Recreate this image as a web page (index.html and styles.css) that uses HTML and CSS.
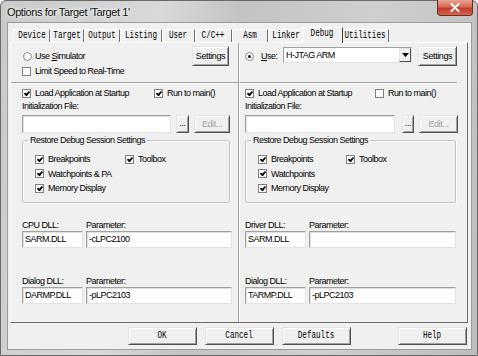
FILE: index.html
```html
<!DOCTYPE html>
<html>
<head>
<meta charset="utf-8">
<title>Options for Target 'Target 1'</title>
<link rel="stylesheet" href="styles.css">
</head>
<body>
<div class="window">
  <div class="titlebar">
    <span class="title">Options for Target 'Target 1'</span>
    <div class="close"><svg width="12" height="9" viewBox="0 0 12 9"><path d="M2.5 1 L9.5 8 M9.5 1 L2.5 8" stroke="#fff" stroke-width="2" stroke-linecap="round"/></svg></div>
  </div>
  <div class="client">
    <div class="tabs">
      <div class="tab t-device"><span class="mono">Device</span></div>
      <div class="tab t-target"><span class="mono">Target</span></div>
      <div class="tab t-output"><span class="mono">Output</span></div>
      <div class="tab t-listing"><span class="mono">Listing</span></div>
      <div class="tab t-user"><span class="mono">User</span></div>
      <div class="tab t-cc"><span class="mono">C/C++</span></div>
      <div class="tab t-asm"><span class="mono">Asm</span></div>
      <div class="tab t-linker"><span class="mono">Linker</span></div>
      <div class="tab t-debug selected"><span class="mono">Debug</span></div>
      <div class="tab t-util"><span class="mono">Utilities</span></div>
    </div>
    <div class="page">
      <div class="half half-left">
        <div class="row row-top">
          <span class="radio"></span><span class="lbl">Use <u>S</u>imulator</span>
          <button class="btn settings-l">Settings</button>
        </div>
        <div class="row row-limit">
          <span class="check"></span><span class="lbl">Limit Speed to Real-Time</span>
        </div>
        <div class="sep sep-l"></div>
        <div class="row row-load">
          <span class="check on"></span><span class="lbl load-l">Load Application at Startup</span>
          <span class="check on"></span><span class="lbl">Run to main()</span>
        </div>
        <div class="row row-label">Initialization File:</div>
        <div class="row row-init">
          <div class="input init-l"></div>
          <button class="btn dots">...</button>
          <button class="btn edit edit-l">Edit...</button>
        </div>
        <fieldset class="group group-l">
          <legend>Restore Debug Session Settings</legend>
          <div class="grid grid-l">
            <div class="row-c"><span class="check on"></span><span class="lbl">Breakpoints</span></div>
            <div class="row-c"><span class="check on"></span><span class="lbl">Toolbox</span></div>
            <div class="row-c"><span class="check on"></span><span class="lbl">Watchpoints &amp; PA</span></div>
            <div class="row-c"></div>
            <div class="row-c"><span class="check on"></span><span class="lbl">Memory Display</span></div>
          </div>
        </fieldset>
        <div class="row row-dlllabel first">
          <span class="dll-col">CPU DLL:</span><span>Parameter:</span>
        </div>
        <div class="row row-dll">
          <div class="input dll">SARM.DLL</div>
          <div class="input par-l">-cLPC2100</div>
        </div>
        <div class="row row-dlllabel second">
          <span class="dll-col">Dialog DLL:</span><span>Parameter:</span>
        </div>
        <div class="row row-dll">
          <div class="input dll">DARMP.DLL</div>
          <div class="input par-l">-pLPC2103</div>
        </div>
      </div>
      <div class="half half-right">
        <div class="row row-top">
          <span class="radio on"></span><span class="lbl use"><u>U</u>se:</span>
          <div class="combo"><span class="combo-text">H-JTAG ARM</span><span class="combo-btn"><svg width="7" height="4" viewBox="0 0 7 4"><path d="M0 0 H7 L3.5 4 Z" fill="#000"/></svg></span></div>
          <button class="btn settings-r">Settings</button>
        </div>
        <div class="row row-limit"></div>
        <div class="sep sep-r"></div>
        <div class="row row-load">
          <span class="check on"></span><span class="lbl load-r">Load Application at Startup</span>
          <span class="check"></span><span class="lbl">Run to main()</span>
        </div>
        <div class="row row-label">Initialization File:</div>
        <div class="row row-init">
          <div class="input init-r"></div>
          <button class="btn dots dots-r">...</button>
          <button class="btn edit edit-r">Edit...</button>
        </div>
        <fieldset class="group group-r">
          <legend>Restore Debug Session Settings</legend>
          <div class="grid grid-r">
            <div class="row-c"><span class="check on"></span><span class="lbl">Breakpoints</span></div>
            <div class="row-c"><span class="check on"></span><span class="lbl">Toolbox</span></div>
            <div class="row-c"><span class="check on"></span><span class="lbl">Watchpoints</span></div>
            <div class="row-c"></div>
            <div class="row-c"><span class="check on"></span><span class="lbl">Memory Display</span></div>
          </div>
        </fieldset>
        <div class="row row-dlllabel first">
          <span class="dll-col">Driver DLL:</span><span>Parameter:</span>
        </div>
        <div class="row row-dll">
          <div class="input dll">SARM.DLL</div>
          <div class="input par-r"></div>
        </div>
        <div class="row row-dlllabel second">
          <span class="dll-col">Dialog DLL:</span><span>Parameter:</span>
        </div>
        <div class="row row-dll">
          <div class="input dll">TARMP.DLL</div>
          <div class="input par-r">-pLPC2103</div>
        </div>
      </div>
    </div>
    <div class="buttons">
      <button class="btn dlg"><span class="mono">OK</span></button>
      <button class="btn dlg"><span class="mono">Cancel</span></button>
      <button class="btn dlg"><span class="mono">Defaults</span></button>
      <button class="btn dlg help"><span class="mono">Help</span></button>
    </div>
  </div>
</div>
</body>
</html>
```
FILE: styles.css
```css
* { box-sizing: border-box; margin: 0; padding: 0; }
html, body { width: 478px; height: 356px; overflow: hidden; background: #fff; }
body {
  font-family: "Liberation Sans", Arial, sans-serif;
  font-size: 9px;
  letter-spacing: -0.5px;
  line-height: 12px;
  color: #000;
}
u { text-decoration: underline; text-underline-offset: 1px; }

.window {
  width: 478px; height: 356px;
  display: flex; flex-direction: column;
  background: linear-gradient(100deg, #c9c9c9 0%, #d9d9d9 30%, #c3c3c3 45%, #cfcfcf 70%, #bdbdbd 100%);
  border: 1px solid #6a6a6a;
  border-radius: 6px 6px 0 0;
  position: relative;
}
.titlebar { height: 21px; display: flex; align-items: center; padding-left: 6px; }
.title {
  font-size: 11px; letter-spacing: -0.4px; color: #111;
  text-shadow: 0 0 6px #fff, 0 0 3px #fff;
}
.close {
  position: absolute; top: -1px; right: 4px;
  width: 36px; height: 16px;
  border: 1px solid #6b2a22; border-top: none;
  border-radius: 0 0 4px 4px;
  background: linear-gradient(#e8a493 0%, #d46b55 45%, #c1392a 55%, #d5674e 100%);
  display: flex; align-items: center; justify-content: center;
}

.client {
  flex: 1;
  margin: 0 5px 5px 6px;
  background: #f0f0f0;
  border: 1px solid #9c9c9c;
  display: flex; flex-direction: column;
}

.mono {
  display: inline-block;
  font-family: "Liberation Mono", monospace;
  font-size: 10px;
  letter-spacing: 0;
  transform: scaleX(0.76);
  white-space: nowrap;
}

/* tabs */
.tabs { display: flex; height: 15px; margin-top: 4px; padding-left: 5px; position: relative; z-index: 2; }
.tab {
  height: 13px; margin-top: 2px;
  border-left: 1px solid #fff; border-top: 1px solid #fff;
  border-right: 1px solid #6d6d6d;
  display: flex; align-items: center; justify-content: center;
  background: #f0f0f0;
  overflow: hidden;
}
.tab.selected {
  height: 16px; margin-top: 0; margin-left: -2px; margin-right: -2px;
  border-right: 1px solid #404040;
  padding-bottom: 3px;
  position: relative; z-index: 3;
}
.t-device { width: 37px; }
.t-target { width: 34px; }
.t-output { width: 36px; }
.t-listing { width: 42px; }
.t-user { width: 33px; }
.t-cc { width: 37px; }
.t-asm { width: 36px; }
.t-linker { width: 36px; }
.t-debug { width: 41px; }
.t-util { width: 48px; }

/* page */
.page {
  height: 281px;
  margin-left: 2px; width: 458px;
  border: 1px solid;
  border-color: #fff #6d6d6d #6d6d6d #fff;
  display: flex;
  background: #f0f0f0;
}
.half { display: flex; flex-direction: column; }
.half-left { width: 228px; padding-left: 11px; padding-right: 9px; border-right: 1px solid #a0a0a0; }
.half-right { width: 228px; padding-left: 5px; padding-right: 10px; border-left: 1px solid #fff; }

.row { display: flex; align-items: center; white-space: nowrap; }
.row-top { height: 20px; margin-top: 3px; }
.row-limit { height: 10px; }
.row-load { height: 12px; margin-top: 3px; }
.row-label { height: 12px; margin-top: 1px; }
.row-init { height: 18px; margin-top: 3px; }
.row-dlllabel { height: 12px; }
.row-dlllabel.first { margin-top: 16px; }
.row-dlllabel.second { margin-top: 28px; }
.row-dll { height: 16px; }

.sep { height: 2px; border-top: 1px solid #a0a0a0; border-bottom: 1px solid #fff; margin-top: 6px; }
.sep-l { margin-left: -11px; margin-right: -9px; }
.sep-r { margin-left: -5px; margin-right: 0; }

.radio {
  width: 9px; height: 9px; border-radius: 50%;
  border: 1px solid #8a8a8a;
  background: radial-gradient(circle at 40% 40%, #fff 50%, #e4e4e4 100%);
  margin-left: 1px; margin-right: 3px;
  display: inline-flex; align-items: center; justify-content: center;
  flex: none;
}
.radio.on::after { content: ""; width: 3px; height: 3px; border-radius: 50%; background: #111; }
.half-right .radio { margin-left: 0; margin-right: 7px; }

.check {
  width: 9px; height: 9px; flex: none;
  border: 1px solid #808080;
  background: #fff;
  margin-right: 4px;
  position: relative;
}
.check.on::after {
  content: ""; position: absolute; left: 1px; top: 0px;
  width: 4px; height: 2px;
  border-left: 2px solid #000; border-bottom: 2px solid #000;
  transform: translate(0, 1px) rotate(-50deg) scale(0.9);
}
.lbl { line-height: 12px; }
.load-l { width: 119px; }
.load-r { width: 117px; }
.use { width: 22px; }

.btn {
  font-family: inherit; font-size: 9px; letter-spacing: -0.4px; color: #000;
  background: #f0f0f0;
  border: 1px solid;
  border-color: #e3e3e3 #505050 #505050 #e3e3e3;
  box-shadow: inset 1px 1px #fff, inset -1px -1px #a0a0a0;
  display: flex; align-items: center; justify-content: center;
  line-height: 12px;
  flex: none;
}
.settings-l { width: 37px; height: 20px; margin-left: auto; }
.settings-r { width: 39px; height: 20px; margin-left: auto; }
.dots { width: 13px; height: 18px; margin-left: 5px; padding-bottom: 3px; }
.dots-r { width: 12px; margin-left: 7px; }
.edit { height: 18px; color: #a0a0a0; margin-left: 5px; }
.edit-l { width: 36px; }
.edit-r { width: 39px; }

.input {
  height: 18px;
  background: #fff;
  border: 1px solid;
  border-color: #a0a0a0 #e3e3e3 #e3e3e3 #a0a0a0;
  box-shadow: inset 1px 1px #e0e0e0;
  padding-left: 2px;
  display: flex; align-items: center;
  flex: none;
}
.init-l { width: 149px; }
.init-r { width: 150px; }
.row-dll .input { height: 17px; }
.dll { width: 61px; margin-right: 3px; }
.par-l { width: 146px; }
.par-r { width: 147px; }
.dll-col { width: 64px; }

.combo {
  width: 129px; height: 16px; margin-top: -2px;
  background: #fff;
  border: 1px solid;
  border-color: #a0a0a0 #e3e3e3 #e3e3e3 #a0a0a0;
  display: flex; align-items: center;
  flex: none;
}
.combo-text { flex: 1; padding-left: 2px; }
.combo-btn {
  width: 12px; height: 14px;
  background: #f0f0f0;
  border: 1px solid;
  border-color: #e3e3e3 #505050 #505050 #e3e3e3;
  display: flex; align-items: center; justify-content: center;
}

/* group boxes */
.group {
  margin-top: 1px;
  height: 69px;
  border: 1px solid #c2c2c2;
  box-shadow: inset 1px 1px #fff, 1px 1px #fff;
  border-radius: 2px;
  padding: 6px 0 0 12px;
}
.group legend { margin-left: -7px; padding: 0 2px; line-height: 12px; }
.group-l { width: 208px; }
.group-r { width: 211px; }
.grid { display: grid; grid-auto-rows: 14.5px; }
.grid-l { grid-template-columns: 90px 1fr; }
.grid-r { grid-template-columns: 88px 1fr; }
.row-c { display: flex; align-items: center; white-space: nowrap; }

/* bottom buttons */
.buttons { display: flex; height: 18px; margin-top: 4px; padding-left: 120px; padding-right: 4px; }
.dlg { width: 69px; height: 18px; margin-right: 8px; }
.help { margin-left: auto; margin-right: 0; }
```
